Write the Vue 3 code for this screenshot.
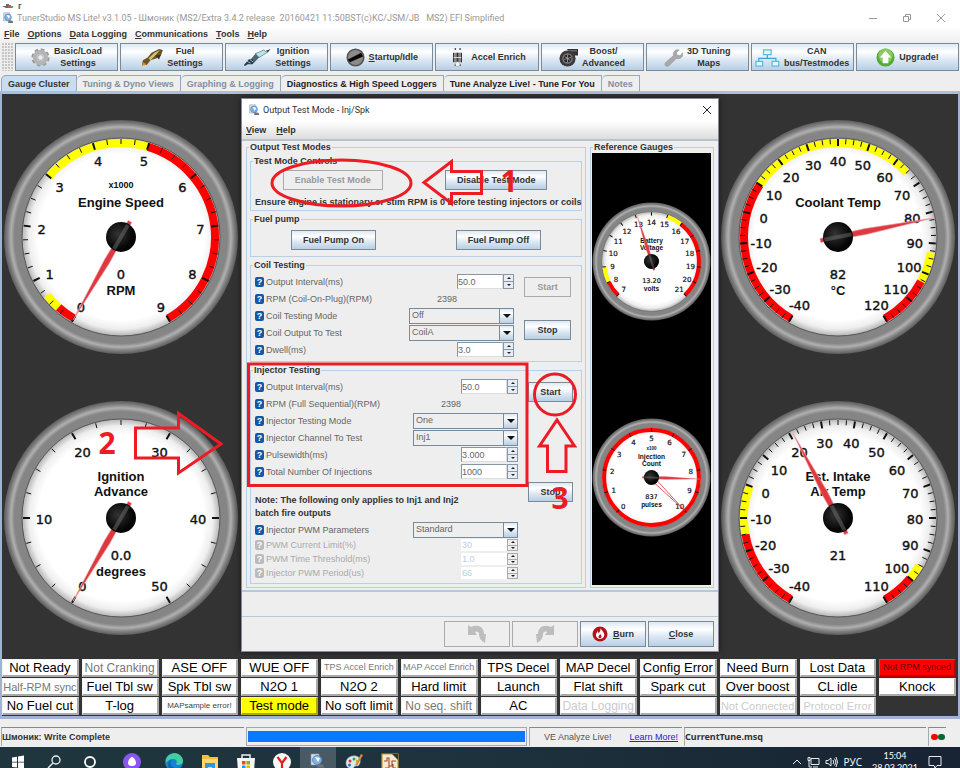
<template>
  <div class="desktop">
    <div class="behind">
      <svg width="11" height="6" viewBox="0 0 11 6"><path d="M0 3h4V1h3v4H4" fill="#667" /><path d="M6 2h3v3H6z" fill="#c55" /><path d="M9 3h2v2H9z" fill="#5a5" /></svg>
      <span>г</span>
    </div>
    <header class="titlebar">
      <svg class="app-icon" viewBox="0 0 16 16" v-html="icons.app"></svg>
      <h1>TunerStudio MS Lite! v3.1.05 - Шмоник (MS2/Extra 3.4.2 release&nbsp; 20160421 11:50BST(c)KC/JSM/JB&nbsp;&nbsp; MS2) EFI Simplified</h1>
      <div class="window-buttons">
        <button aria-label="Minimize"><svg width="10" height="10" viewBox="0 0 10 10"><path d="M1 5.500h8" /></svg></button>
        <button aria-label="Restore"><svg width="10" height="10" viewBox="0 0 10 10"><path d="M1.500 3.500h5v5h-5zM3.500 3.500v-2h5v5h-2" /></svg></button>
        <button aria-label="Close"><svg width="10" height="10" viewBox="0 0 10 10"><path d="M1 1l8 8M9 1l-8 8" /></svg></button>
      </div>
    </header>
    <nav class="menubar">
      <a v-for="item in menu" :key="item" href="#"><u>{{ item[0] }}</u>{{ item.slice(1) }}</a>
    </nav>
    <div class="toolbar">
      <span class="grip"></span>
      <button v-for="tool in tools" :key="tool.icon" class="tool metal">
        <svg :viewBox="tool.box" :class="tool.icon" v-html="icons[tool.icon]"></svg>
        <span><template v-if="tool.key"><u>{{ tool.key }}</u></template>{{ tool.text }}</span>
      </button>
    </div>
    <div class="tabs" role="tablist">
      <button
        v-for="tab in tabs"
        :key="tab.text"
        role="tab"
        class="tab"
        :class="{ active: tab.active, disabled: tab.disabled }"
      >{{ tab.text }}</button>
    </div>

    <main class="cluster">
      <div class="gauges">
        <Gauge v-for="g in gauges" :key="g.id" class="gauge" v-bind="g" />
      </div>
      <div class="indicators">
        <div v-for="(light, i) in lights" :key="i" class="light" :class="light[1]">{{ light[0] }}</div>
      </div>

      <section class="dialog">
        <div class="dialog-title">
          <svg class="app-icon" viewBox="0 0 16 16" v-html="icons.app"></svg>
          <h2>Output Test Mode - Inj/Spk</h2>
          <button aria-label="Close dialog"><svg width="10" height="10" viewBox="0 0 10 10"><path d="M1 1l8 8M9 1l-8 8" /></svg></button>
        </div>
        <nav class="dialog-menu">
          <a href="#"><u>V</u>iew</a>
          <a href="#"><u>H</u>elp</a>
        </nav>
        <div class="dialog-body">
          <fieldset class="modes">
            <legend>Output Test Modes</legend>
            <div class="groups">
              <fieldset class="group">
                <legend>Test Mode Controls</legend>
                <div class="pair">
                  <button class="btn" disabled>Enable Test Mode</button>
                  <button class="btn metal">Disable Test Mode</button>
                </div>
                <p class="hint">Ensure engine is stationary or stim RPM is 0 before testing injectors or coils</p>
              </fieldset>

              <fieldset class="group">
                <legend>Fuel pump</legend>
                <div class="pair pump">
                  <button class="btn metal">Fuel Pump On</button>
                  <button class="btn metal">Fuel Pump Off</button>
                </div>
              </fieldset>

              <fieldset v-for="group in groups" :key="group.title" class="group">
                <legend>{{ group.title }}</legend>
                <div class="split">
                  <div class="form">
                    <template v-for="row in group.rows" :key="row.id">
                      <p v-if="row.note" class="note">{{ row.note }}</p>
                      <div v-else class="row" :class="{ off: row.off }">
                        <span class="help">?</span>
                        <label :for="row.id">{{ row.label }}</label>
                        <output v-if="row.type === 'value'" :id="row.id">{{ row.value }}</output>
                        <span v-else-if="row.type === 'select'" class="combo">
                          <select :id="row.id"><option>{{ row.value }}</option></select>
                          <i class="metal"></i>
                        </span>
                        <span v-else class="spinner">
                          <input :id="row.id" type="text" :value="row.value" :disabled="row.off" />
                          <span class="arrows">
                            <button :aria-label="`Increase ${row.label}`" :disabled="row.off"></button>
                            <button :aria-label="`Decrease ${row.label}`" :disabled="row.off"></button>
                          </span>
                        </span>
                      </div>
                    </template>
                  </div>
                  <div class="side" :class="group.side">
                    <button class="btn" :class="{ metal: !group.idle }" :disabled="group.idle">Start</button>
                    <button class="btn metal">Stop</button>
                  </div>
                </div>
              </fieldset>
            </div>
          </fieldset>

          <fieldset class="reference">
            <legend>Reference Gauges</legend>
            <div class="black">
              <Gauge v-for="g in refGauges" :key="g.id" class="gauge" v-bind="g" />
            </div>
          </fieldset>
        </div>
        <div class="message"></div>
        <div class="actions">
          <button class="btn" aria-label="Undo" disabled>
            <svg width="20" height="20" viewBox="0 0 20 20"><path d="M1 1l3 2c6-3 13-1 13 7h2l-1 9c-4-2-6-5-6-9 0-2-2-3-4-2l2 3H1z" fill="#bdbdbd" /></svg>
          </button>
          <button class="btn" aria-label="Redo" disabled>
            <svg width="20" height="20" viewBox="0 0 20 20"><path d="M19 1l-3 2C10 0 3 2 3 10H1l1 9c4-2 6-5 6-9 0-2 2-3 4-2l-2 3h9z" fill="#bdbdbd" /></svg>
          </button>
          <button class="btn metal">
            <svg width="16" height="16" viewBox="0 0 16 16"><circle cx="8" cy="8" r="7.500" fill="#b5121b" /><path d="M8.500 2c.5 2 4 4 3.800 7A4.200 4.200 0 0 1 4 9.500C3.800 7.500 5 7 5.200 5.200c1 .6 1.200 1.400 1.200 2C8 6 8.800 4 8.500 2z" fill="#fff" /><path d="M8.300 7.500c0 1.500 1.500 2 1.200 3.500-.4 1.600-3 1.500-3-.3 0-1 1.500-1.500 1.800-3.200z" fill="#b5121b" /></svg>
            <span><u>B</u>urn</span>
          </button>
          <button class="btn metal"><span><u>C</u>lose</span></button>
        </div>

        <svg class="marks" viewBox="241 98 478 554">
          <ellipse cx="341.500" cy="183" rx="69.500" ry="23" />
          <path d="M424 182.500L451.500 161.500V171.500H481.500V193.500H451.500V203.500Z" />
          <rect x="248.500" y="364" width="278.500" height="121.500" />
          <circle cx="555" cy="394.500" r="20.500" />
          <path d="M557 420L574.500 446H566V471.500H547.500V446H539.500Z" />
          <path d="M135.500 428H178.500V413.500L221 444L178.500 473V458H135.500Z" />
          <text x="509" y="192">1</text>
          <text x="107" y="454">2</text>
          <text x="560" y="509">3</text>
        </svg>
      </section>
    </main>

    <footer class="statusbar">
      <div class="cell state">Шмоник: Write Complete</div>
      <div class="progress"><div></div></div>
      <div class="cell live"><span>VE Analyze Live!</span><a href="#">Learn More!</a></div>
      <div class="cell tune">CurrentTune.msq</div>
      <div class="cell leds"><i class="red"></i><i class="green"></i></div>
    </footer>

    <div class="taskbar">
      <div class="pinned">
        <button v-for="app in apps" :key="app" :class="app" :aria-label="app">
          <svg width="18" height="18" viewBox="0 0 18 18" v-html="icons[app]"></svg>
        </button>
      </div>
      <div class="tray">
        <svg width="10" height="12" viewBox="0 0 10 12"><path d="M1 8l4-4 4 4" /></svg>
        <svg width="13" height="12" viewBox="0 0 13 12"><path d="M4 2.500h8v6H4zM6 11h5M1 1.500h2v3H1zM2 5v6h3" /></svg>
        <svg width="13" height="12" viewBox="0 0 13 12"><path d="M1 4.500h2l3-2.500v8L3 7.500H1zM8 4q1.500 2 0 4M9.500 2.500q3 3.500 0 7M11 1q3 5 0 10" /></svg>
        <span class="lang">РУС</span>
        <time>15:04<br />28.03.2021</time>
        <svg class="notice" width="14" height="14" viewBox="0 0 14 14"><path d="M1 1.500h12v9H9l-2 2.500-1-2.500H1z" /></svg>
      </div>
    </div>
  </div>
</template>

<script setup>
import { h } from 'vue'

const polar = (angle, r) => {
  const a = (angle * Math.PI) / 180
  return [Math.sin(a) * r, -Math.cos(a) * r]
}

const arc = (from, to, r) => {
  const [x1, y1] = polar(from, r)
  const [x2, y2] = polar(to, r)
  return `M${x1} ${y1}A${r} ${r} 0 ${to - from > 180 ? 1 : 0} 1 ${x2} ${y2}`
}

// round dial, drawn around 0,0 with a radius of 117
const Gauge = (g) => {
  const sweep = g.sweep
  const start = 360 - sweep / 2
  const angle = (v) => start + ((v - g.min) / (g.max - g.min)) * sweep
  const out = [
    h('defs', [
      h('radialGradient', { id: `face-${g.id}` }, [
        h('stop', { offset: '84%', 'stop-color': '#fff' }),
        h('stop', { offset: '93%', 'stop-color': '#eee' }),
        h('stop', { offset: '100%', 'stop-color': '#b4b4b4' })
      ]),
      h('radialGradient', { id: `rim-${g.id}` }, [
        h('stop', { offset: '91%', 'stop-color': '#858585' }),
        h('stop', { offset: '94%', 'stop-color': '#b0b0b0' }),
        h('stop', { offset: '97%', 'stop-color': '#808080' }),
        h('stop', { offset: '100%', 'stop-color': '#5c5c5c' })
      ]),
      h('radialGradient', { id: `hub-${g.id}`, cx: '40%', cy: '40%' }, [
        h('stop', { offset: '0%', 'stop-color': '#333' }),
        h('stop', { offset: '100%', 'stop-color': '#050505' })
      ])
    ]),
    h('circle', { r: 117, fill: `url(#rim-${g.id})` }),
    h('circle', { r: 99, fill: `url(#face-${g.id})`, stroke: '#555', 'stroke-width': 1 })
  ]
  g.zones.forEach(([from, to, color]) => {
    out.push(h('path', { d: arc(angle(from), angle(to), 94), fill: 'none', stroke: color, 'stroke-width': 8 }))
  })
  const count = Math.round((g.max - g.min) / g.minor)
  for (let i = 0; i <= count; i++) {
    const major = i % Math.round(g.major / g.minor) === 0
    const a = angle(g.min + i * g.minor)
    const [x1, y1] = polar(a, 98)
    const [x2, y2] = polar(a, major ? 91 : 93)
    out.push(h('line', { x1, y1, x2, y2, stroke: '#111', 'stroke-width': major ? 2 : 1 }))
  }
  const title = (y, size, value) =>
    h('text', { x: 0, y, 'font-size': size, 'font-weight': 700, 'text-anchor': 'middle', fill: '#111' }, value)
  const digits = (x, y, size, value) =>
    h('text', { x, y, 'font-size': size, 'font-family': 'DejaVu Sans, sans-serif', 'font-weight': 400, 'text-anchor': 'middle', fill: '#111', stroke: '#111', 'stroke-width': 0.4 }, value)
  for (let v = g.min; v <= g.max; v += g.major) {
    const [x, y] = polar(angle(v), g.labelRadius)
    out.push(digits(x, y + 6, g.small ? 14 : 13, String(v)))
  }
  const lines = g.title
  lines.forEach((line, i) => out.push(title(lines.length > 1 ? -37 + i * 15 : -30, 13, line)))
  if (g.scale) out.push(title(g.small ? -55 : -49, 9, g.scale))
  out.push(digits(0, 42, 13, g.value))
  if (g.units) out.push(title(58, 13, g.units))
  if (g.peak) {
    out.push(h('path', { d: 'M-4 0L0 -94L4 0', fill: 'none', stroke: '#e03038', 'stroke-width': 1.5, transform: `rotate(${angle(g.peak)})` }))
  }
  const turn = `rotate(${angle(g.reading)})`
  out.push(h('path', { d: 'M-2 18L-3 -28L0 -96L3 -28L2 18Z', fill: '#e03840', stroke: '#e8a0a4', 'stroke-width': 0.6, transform: turn }))
  out.push(h('circle', { r: 15, fill: `url(#hub-${g.id})` }))
  out.push(h('path', { d: 'M-2 14L-2 -14L2 -14L2 14Z', fill: '#777', opacity: 0.45, transform: turn }))
  return h('svg', { viewBox: '-118 -118 236 236', role: 'img', 'aria-label': lines.join(' ') }, out)
}
Gauge.props = ['id', 'title', 'min', 'max', 'minor', 'major', 'sweep', 'zones', 'value', 'reading', 'units', 'scale', 'labelRadius', 'peak', 'small']

const red = '#f00'
const yellow = '#ff0'

const gauges = [
  {
    id: 'rpm', title: ['Engine Speed'], min: 0, max: 9, minor: 0.25, major: 1, sweep: 300, labelRadius: 80,
    zones: [[0, 0.35, red], [0.35, 0.65, yellow], [3, 5, yellow], [5, 9, red]],
    value: '0', reading: 0, units: 'RPM', scale: 'x1000'
  },
  {
    id: 'clt', title: ['Coolant Temp'], min: -40, max: 120, minor: 2.5, major: 10, sweep: 300, labelRadius: 77,
    zones: [[-40, 10, red], [10, 65, yellow], [93, 103, yellow], [103, 120, red]],
    value: '82', reading: 82, units: '°C'
  },
  {
    id: 'adv', title: ['Ignition', 'Advance'], min: 0, max: 50, minor: 2.5, major: 10, sweep: 300, labelRadius: 77,
    zones: [], value: '0.0', reading: 0, units: 'degrees'
  },
  {
    id: 'iat', title: ['Est. Intake', 'Air Temp'], min: -40, max: 110, minor: 2.5, major: 10, sweep: 300, labelRadius: 77,
    zones: [[-40, -15, red], [-15, 0, yellow], [95, 100, yellow], [100, 110, red]],
    value: '21', reading: 21
  }
]

const refGauges = [
  {
    id: 'bat', title: ['Battery', 'Voltage'], min: 7, max: 21, minor: 1, major: 1, sweep: 270, labelRadius: 78, small: true,
    zones: [[7, 8, red], [8, 9, yellow], [15, 16, yellow], [16, 21, red]],
    value: '13.20', reading: 13.1, units: 'volts'
  },
  {
    id: 'inj', title: ['Injection', 'Count'], min: 0, max: 10, minor: 1, major: 1, sweep: 270, labelRadius: 79, small: true,
    zones: [[0, 10, red], [10, 13.34, red]],
    value: '837', reading: 8.4, units: 'pulses', scale: 'x100', peak: 10
  }
]

const menu = ['File', 'Options', 'Data Logging', 'Communications', 'Tools', 'Help']

const tools = [
  { icon: 'gear', box: '0 0 20 20', text: 'Basic/Load\nSettings' },
  { icon: 'injector', box: '0 0 24 20', text: 'Fuel\nSettings' },
  { icon: 'plug', box: '0 0 30 20', text: 'Ignition\nSettings' },
  { icon: 'key', box: '0 0 20 20', key: 'S', text: 'tartup/Idle' },
  { icon: 'pump', box: '0 0 20 20', text: 'Accel Enrich' },
  { icon: 'turbo', box: '0 0 20 20', text: 'Boost/\nAdvanced' },
  { icon: 'wrench', box: '0 0 20 20', text: '3D Tuning\nMaps' },
  { icon: 'network', box: '0 0 26 20', text: 'CAN\nbus/Testmodes' },
  { icon: 'upgrade', box: '0 0 20 20', text: 'Upgrade!' }
]

const tabs = [
  { text: 'Gauge Cluster', active: true },
  { text: 'Tuning & Dyno Views', disabled: true },
  { text: 'Graphing & Logging', disabled: true },
  { text: 'Diagnostics & High Speed Loggers' },
  { text: 'Tune Analyze Live! - Tune For You' },
  { text: 'Notes', disabled: true }
]

const lights = [
  ['Not Ready'], ['Not Cranking', 'soft'], ['ASE OFF'], ['WUE OFF'], ['TPS Accel Enrich', 'soft tiny'], ['MAP Accel Enrich', 'soft tiny'],
  ['TPS Decel'], ['MAP Decel'], ['Config Error'], ['Need Burn'], ['Lost Data'], ['Not RPM synced', 'alarm'],
  ['Half-RPM sync', 'soft mid'], ['Fuel Tbl sw'], ['Spk Tbl sw'], ['N2O 1'], ['N2O 2'], ['Hard limit'],
  ['Launch'], ['Flat shift'], ['Spark cut'], ['Over boost'], ['CL idle'], ['Knock'],
  ['No Fuel cut'], ['T-log'], ['MAPsample error!', 'small'], ['Test mode', 'warn'], ['No soft limit'], ['No seq. shift', 'soft'],
  ['AC'], ['Data Logging', 'faint'], [''], ['Not Connected', 'faint mid'], ['Protocol Error', 'faint mid']
]

const groups = [
  {
    title: 'Coil Testing',
    idle: true,
    side: 'coil',
    rows: [
      { id: 'coil-interval', label: 'Output Interval(ms)', value: '50.0' },
      { id: 'coil-rpm', label: 'RPM (Coil-On-Plug)(RPM)', type: 'value', value: '2398' },
      { id: 'coil-mode', label: 'Coil Testing Mode', type: 'select', value: 'Off' },
      { id: 'coil-output', label: 'Coil Output To Test', type: 'select', value: 'CoilA' },
      { id: 'coil-dwell', label: 'Dwell(ms)', value: '3.0' }
    ]
  },
  {
    title: 'Injector Testing',
    side: 'inj',
    rows: [
      { id: 'inj-interval', label: 'Output Interval(ms)', value: '50.0' },
      { id: 'inj-rpm', label: 'RPM (Full Sequential)(RPM)', type: 'value', value: '2398' },
      { id: 'inj-mode', label: 'Injector Testing Mode', type: 'select', value: 'One' },
      { id: 'inj-channel', label: 'Injector Channel To Test', type: 'select', value: 'Inj1' },
      { id: 'inj-width', label: 'Pulsewidth(ms)', value: '3.000' },
      { id: 'inj-total', label: 'Total Number Of Injections', value: '1000' },
      { id: 'inj-note', note: 'Note: The following only applies to Inj1 and Inj2\nbatch fire outputs' },
      { id: 'pwm-params', label: 'Injector PWM Parameters', type: 'select', value: 'Standard' },
      { id: 'pwm-limit', label: 'PWM Current Limit(%)', value: '30', off: true },
      { id: 'pwm-threshold', label: 'PWM Time Threshold(ms)', value: '1.0', off: true },
      { id: 'pwm-period', label: 'Injector PWM Period(us)', value: '66', off: true }
    ]
  }
]

const apps = ['start', 'search', 'cortana', 'alice', 'edge', 'explorer', 'store', 'yandex', 'tuner', 'paint', 'logviewer']

const tunerIcon = '<path d="M2 1h8v11H2z" fill="#d5dde6" stroke="#8898a8" stroke-width=".6"/><circle cx="8" cy="7" r="4.500" fill="#7fb2e0" stroke="#5a92c8"/><path d="M6 4l3 5 2-4z" fill="#fff"/><path d="M9 11l5 .5 1 3H8z" fill="#6c7480"/>'

const icons = {
  app: tunerIcon,
  tuner: tunerIcon,
  gear: '<circle cx="10" cy="10" r="7.500" fill="none" stroke="#989898" stroke-width="4" stroke-dasharray="3.500 2.390"/><circle cx="10" cy="10" r="5.800" fill="none" stroke="#b5b5b5" stroke-width="4.500"/><circle cx="10" cy="10" r="3" fill="#e6edf4" stroke="#888" stroke-width=".6"/>',
  injector: '<path d="M1 18l1-5 5-3 4-5 8-4 4 1-2 6-5 3-6 2-4 5z" fill="#6a5426"/><path d="M8 11l6-6 6-3-5 6-5 5z" fill="#d8c070"/><path d="M1 19l1-4 4 2z" fill="#e28a20"/><path d="M15 8l6-1-2 5z" fill="#3c3423"/>',
  plug: '<path d="M1 18l5-6 4-1 3 3-3 3-5 0-3 2z" fill="#263744"/><path d="M9 11l5-6 4 4-6 6z" fill="#4e6573"/><path d="M13 6l9-4 3 3-8 5z" fill="#b5e4ef" stroke="#54717c" stroke-width=".7"/><path d="M24 3l5-2-3 4z" fill="#445"/><path d="M4 14l4 2M7 12l4 3" stroke="#a8c8dc" fill="none"/>',
  key: '<circle cx="10" cy="10" r="9.500" fill="#555"/><circle cx="10" cy="10" r="7.800" fill="#8b8b8b"/><path d="M2 12l14-7 2 4L4 15z" fill="#080808"/>',
  pump: '<path d="M7 5h6v10H7z" fill="#888"/><path d="M6 5v5M10 5v10M14 5v10M6 10v5" stroke="#333" stroke-width="1.500"/><path d="M6 10h8" stroke="#ddd"/><circle cx="10" cy="17" r="2.500" fill="#f5f5f5" stroke="#999" stroke-width=".6"/><path d="M7 1h1.500M12 1h1.500M7 18h1M12.500 18h1" stroke="#222" stroke-width="1.500"/>',
  turbo: '<path d="M8 1h12v7h-4z" fill="#333"/><path d="M10 3h9" stroke="#888"/><circle cx="9" cy="11" r="8.500" fill="#3b3b3b"/><circle cx="9" cy="11" r="5.500" fill="#777"/><circle cx="9" cy="11" r="4" fill="#222"/><path d="M6 9l6 4M9 7v8M5.500 12l7-2" stroke="#999"/>',
  wrench: '<path d="M2 15l8-7c-1-4 2-7 6-6l-3 3 1 3 3 0 3-3c0 5-3 7-7 6l-7 7c-3 3-7 0-4-3z" fill="#a9a9a9" stroke="#8a8a8a" stroke-width=".5"/>',
  network: '<path d="M13 7v4M4 14v-3h18v3" fill="none" stroke="#35a9d6" stroke-width="1.300"/><path d="M9 2h8v5H9zM1 14h7v5H1zM18 14h7v5h-7z" fill="#e9f6fc" stroke="#4fc0e8" stroke-width="1.300"/>',
  upgrade: '<circle cx="10" cy="10" r="9.500" fill="#58a83a"/><circle cx="10" cy="8" r="7.500" fill="#86cc5e"/><path d="M10 3l6 7h-3v6H7v-6H4z" fill="#fff"/>',
  start: '<path d="M3 4.500l5-.8v5H3zM9 3.500l6-.9v6.100H9zM3 9.600h5v5l-5-.7zM9 9.600h6v6.100l-6-.9z" fill="#fff"/>',
  search: '<circle cx="11" cy="7" r="4" fill="none" stroke="#e8ecee" stroke-width="1.300"/><path d="M8 10l-5 5" stroke="#e8ecee" stroke-width="1.400"/>',
  cortana: '<circle cx="9" cy="9" r="5" fill="none" stroke="#fff" stroke-width="1.800"/>',
  alice: '<circle cx="9" cy="9" r="9" fill="#8a55f5"/><path d="M9 4c2 0 4 4 4 6s-1.500 3-4 3-4-1-4-3 2-6 4-6z" fill="#fff"/>',
  edge: '<circle cx="9" cy="9" r="9" fill="#1682d0"/><path d="M1 7C3-2 17-2 18 8c0 4-6 5-7 3 2-3 0-5-3-5-3 0-6 2-7 4z" fill="#42cfa0"/><path d="M7 7c-4 3-1 9 6 8 1 0 3-1 3-1-3 5-12 4-13-2 0-3 2-5 4-5z" fill="#1160aa"/>',
  explorer: '<path d="M1 2h6l2 2h8v13H1z" fill="#f4bd3c"/><path d="M1 6h16v11H1z" fill="#fbd775"/><path d="M4 10h10v7h-3v-3H7v3H4z" fill="#3c94d8"/>',
  store: '<path d="M5 5V2h8v3" fill="none" stroke="#eee" stroke-width="1.500"/><path d="M0 5h18l-1 13H1z" fill="#f6f6f6"/><path d="M5 8h3.500v3.500H5z" fill="#e84c22"/><path d="M9.500 8H13v3.500H9.500z" fill="#7fba00"/><path d="M5 12.500h3.500V16H5z" fill="#1aa0e8"/><path d="M9.500 12.500H13V16H9.500z" fill="#f5b400"/>',
  yandex: '<circle cx="9" cy="9" r="9" fill="#f8f8f8"/><path d="M4.500 4L9 10v6M13.500 4L9 10" fill="none" stroke="#e02020" stroke-width="2.200"/>',
  paint: '<path d="M1 10C1 5 6 2 11 3c5 1 5 6 3 9-1 2-4 0-5 2-1 3-8 2-8-4z" fill="#d8e9f2" stroke="#7fa5ba" stroke-width=".6"/><circle cx="5" cy="8" r="1.500" fill="#d33"/><circle cx="9" cy="6" r="1.500" fill="#3a3"/><circle cx="4.500" cy="12" r="1.500" fill="#36c"/><circle cx="12" cy="8" r="1.300" fill="#e9b020"/><path d="M10 12l6-11 2 1-6 11z" fill="#d9893a"/>',
  logviewer: '<path d="M1 1h16v17H1z" fill="#f3ead2" stroke="#c7982c" stroke-width="1.200"/><path d="M11 1h6v6z" fill="#333"/><path d="M3 8h3V5h2v8h3V8h4M4 15h4v-3M12 11v4h3" fill="none" stroke="#a8442a" stroke-width="1.100"/>'
}
</script>

<style>
body {
  margin: 0;
}
</style>

<style scoped>
.desktop {
  display: flex;
  flex-direction: column;
  min-height: 100vh;
  overflow: hidden;
  background: #eee;
  color: #333;
  font: bold 9px/12px "Liberation Sans", Arial, sans-serif;
}

.desktop * {
  box-sizing: border-box;
}

button,
input,
select {
  margin: 0;
  padding: 0;
  border: 0;
  border-radius: 0;
  background: none;
  color: inherit;
  font: inherit;
}

a {
  color: inherit;
  text-decoration: none;
}

h1,
h2,
p {
  margin: 0;
  font-size: 9px;
}

.metal {
  border: 1px solid #7a8a99;
  background: linear-gradient(#dde8f3, #fff 30%, #dde8f3 60%, #b8cfe5);
}

.behind {
  display: flex;
  align-items: center;
  gap: 5px;
  height: 9px;
  padding: 2px 2px 0;
  background: #fff;
  color: #555;
}

.titlebar {
  display: flex;
  align-items: center;
  height: 17px;
  padding-left: 2px;
  background: #fff;
}

.app-icon {
  flex: none;
  width: 12px;
  height: 12px;
}

.titlebar h1,
.dialog-title h2 {
  flex: 1;
  margin-left: 3px;
  font-family: Roboto, "Open Sans", sans-serif;
  font-weight: 400;
  white-space: nowrap;
}

.titlebar h1 {
  color: #999;
}

.window-buttons {
  display: flex;
  gap: 24px;
  padding-right: 14px;
}

.window-buttons button,
.dialog-title button {
  display: flex;
}

.window-buttons path,
.dialog-title button path {
  fill: none;
  stroke: #999;
}

.menubar {
  display: flex;
  gap: 8px;
  height: 16px;
  padding: 2px 4px;
  background: linear-gradient(#fff, #f0f0f0);
}

.toolbar {
  display: flex;
  gap: 2px;
  height: 31px;
  padding: 1px 1px 2px 2px;
}

.grip {
  width: 11px;
  background: radial-gradient(circle at 1px 1px, #c5c5c5 1px, transparent 1px) 0 0 / 3px 3px;
}

.tool {
  display: flex;
  flex: 1;
  align-items: center;
  justify-content: center;
  gap: 4px;
  color: #333;
  white-space: pre;
}

.tool svg {
  flex: none;
  height: 19px;
}

.tabs {
  display: flex;
  align-items: flex-end;
  height: 18px;
  padding: 2px 1px 0;
}

.tab {
  height: 16px;
  padding: 0 6px;
  border: 1px solid #98a8b8;
  border-left-width: 0;
  border-bottom: 0;
  border-top-left-radius: 5px;
  color: #222;
}

.tab.disabled {
  color: #8090a0;
}

.tab.active {
  border-left-width: 1px;
  background: #c8ddf2;
  color: #333;
}

.cluster {
  position: relative;
  display: flex;
  flex: 1;
  flex-direction: column;
  border: 2px solid #9fb4d4;
  border-top: 3px solid #a9c2dc;
  border-bottom-width: 3px;
  background: #333;
}

.gauges {
  display: grid;
  flex: 1;
  grid-template-columns: 236px 236px;
  justify-content: space-between;
  align-items: center;
  padding: 2px 2px 0 1px;
}

.gauge {
  display: block;
  width: 100%;
  font-family: "Liberation Sans", Arial, sans-serif;
}

.indicators {
  display: grid;
  grid-template-columns: repeat(12, minmax(0, 1fr));
  grid-auto-rows: 18px;
  gap: 1px 3px;
  padding: 0 2px 1px 0;
}

.light {
  border: 1px solid #f4f4f4;
  border-right: 2px solid #aaa;
  border-bottom: 2px solid #aaa;
  background: #fff;
  color: #000;
  font: 13px/15px "Liberation Sans", Arial, sans-serif;
  text-align: center;
  white-space: nowrap;
}

.light.soft {
  color: #777;
  font-size: 12px;
  line-height: 17px;
}

.light.tiny {
  font-size: 9px;
  line-height: 15px;
}

.light.mid {
  font-size: 11px;
}

.light.small {
  color: #444;
  font-size: 8px;
}

.light.faint {
  color: #ccc;
  font-size: 12px;
  line-height: 17px;
}

.light.faint.mid {
  font-size: 11px;
}

.light.alarm {
  border-color: #f33 #b00 #b00 #f33;
  background: #f00;
  color: #600;
  font-size: 9px;
}

.light.warn {
  border-color: #ff6 #aa0 #aa0 #ff6;
  background: #ff0;
}

.dialog {
  position: absolute;
  top: 4px;
  left: 50%;
  width: 478px;
  margin-left: -239px;
  border: 1px solid #889;
  background: #eee;
  box-shadow: 0 0 6px #0008;
}

.dialog-title {
  display: flex;
  align-items: center;
  height: 22px;
  padding: 0 6px;
  background: #fff;
}

.dialog-title button path {
  stroke: #222;
}

.dialog-menu {
  display: flex;
  gap: 10px;
  height: 20px;
  padding: 3px 4px;
  border-bottom: 2px solid #b8c4ce;
  background: linear-gradient(#fff, #ddd);
}

.dialog-body {
  display: flex;
  gap: 4px;
  padding: 0 4px 2px;
}

fieldset {
  min-width: 0;
  margin: 0;
  padding: 0;
  border: 1px solid #b8cfe5;
}

legend {
  margin-left: 2px;
  padding: 0 1px;
  line-height: 12px;
}

.modes {
  flex: 1;
}

.reference {
  width: 124px;
}

.groups {
  display: flex;
  flex-direction: column;
  gap: 2px;
  padding: 2px 3px 3px;
}

.pair {
  display: grid;
  grid-template-columns: 1fr 1fr;
  justify-items: center;
  padding: 3px 3px 0 0;
}

.pair.pump {
  padding: 5px 0 6px;
}

.btn {
  height: 20px;
  padding: 0 11px;
  white-space: nowrap;
}

.btn:disabled {
  border: 1px solid #aaa;
  color: #999;
}

.hint {
  padding: 6px 4px 2px;
  white-space: nowrap;
}

.split {
  display: flex;
}

.form {
  flex: 1;
  padding: 2px 0 3px 4px;
}

.row {
  display: flex;
  align-items: center;
  height: 17px;
  color: #666;
  font-weight: 400;
}

.row label {
  flex: 1;
  white-space: nowrap;
}

.row.off {
  height: 14px;
  color: #aaa;
}

.help {
  width: 9px;
  height: 10px;
  margin-right: 2px;
  border-radius: 2px;
  background: #1258a8;
  color: #fff;
  font-weight: 700;
  line-height: 10px;
  text-align: center;
}

.off .help {
  background: #bbb;
}

output {
  margin-right: 57px;
}

.combo {
  position: relative;
  width: 105px;
  height: 16px;
}

.combo select {
  width: 100%;
  height: 100%;
  padding: 0 2px 2px;
  border: 1px solid #7a8a99;
  background: #eee;
  appearance: none;
}

.combo i {
  position: absolute;
  top: 0;
  right: 0;
  width: 15px;
  height: 16px;
  pointer-events: none;
}

.combo i::after {
  content: "";
  display: block;
  margin: 5px auto;
  width: 0;
  border: 4px solid transparent;
  border-top-color: #111;
  border-bottom: 0;
}

.spinner {
  display: flex;
  width: 57px;
  height: 15px;
}

.spinner input {
  flex: 1;
  min-width: 0;
  border: 1px solid #8796a5;
  border-right-color: #ddd;
  border-bottom-color: #ddd;
  background: #fff;
}

.spinner input:disabled {
  border-color: #fff;
  color: #b8cfe5;
}

.off .spinner {
  height: 12px;
}

.arrows {
  display: flex;
  flex-direction: column;
  width: 11px;
}

.arrows button {
  display: flex;
  flex: 1;
  align-items: center;
  justify-content: center;
  border: 1px solid #8a98a6;
  background: #e6edf4;
}

.arrows button + button {
  border-top: 0;
}

.arrows button::after {
  content: "";
  border: 2px solid transparent;
  border-top: 0;
  border-bottom-color: #222;
}

.arrows button + button::after {
  border-top: 2px solid #222;
  border-bottom: 0;
}

.off .arrows button {
  border-color: #aaa;
  background: #eee;
}

.side {
  display: flex;
  flex-direction: column;
  align-items: flex-start;
  width: 67px;
  padding: 6px 10px 0;
}

.side .btn {
  width: 47px;
  padding: 0;
}

.side.coil {
  gap: 23px;
}

.side.inj {
  width: 63px;
  gap: 80px;
}

.side.inj .btn {
  width: 45px;
}

.note {
  padding: 14px 0 1px;
  line-height: 13px;
  white-space: pre;
}

.black {
  display: grid;
  grid-auto-rows: 1fr;
  align-items: center;
  height: 432px;
  margin: 0 2px 2px 1px;
  background: #000;
}

.message {
  height: 27px;
  border-top: 2px solid #b8c8d8;
  border-bottom: 1px solid #b8c8d8;
}

.actions {
  display: flex;
  justify-content: flex-end;
  gap: 2px;
  padding: 4px 4px 4px 3px;
}

.actions .btn {
  display: flex;
  align-items: center;
  justify-content: center;
  gap: 5px;
  width: 66px;
  height: 26px;
  padding: 0;
}

.marks {
  position: absolute;
  top: -1px;
  left: -1px;
  width: 478px;
  height: 554px;
  overflow: visible;
  pointer-events: none;
}

.marks ellipse,
.marks path,
.marks rect,
.marks circle {
  fill: none;
  stroke: #ed1c24;
  stroke-width: 3px;
}

.marks text {
  fill: #ed1c24;
  font: bold 30px "Open Sans", sans-serif;
  text-anchor: middle;
}

.statusbar {
  display: flex;
  gap: 2px;
  height: 28px;
  padding: 8px 14px 1px 1px;
}

.cell {
  display: flex;
  align-items: center;
  border: 1px solid #aaa;
  border-right: 0;
  border-bottom: 0;
  border-top-color: #888;
}

.state {
  width: 243px;
}

.progress {
  width: 281px;
  padding: 3px 1px;
  border: 1px solid #9ab;
}

.progress div {
  height: 100%;
  background: #0a78ff;
}

.live {
  justify-content: space-between;
  width: 153px;
  padding: 0 4px 0 14px;
  color: #555;
  font-weight: 400;
}

.live a {
  color: #22d;
  text-decoration: underline;
}

.tune {
  flex: 1;
  font-family: "Noto Sans", sans-serif;
}

.leds {
  width: 18px;
  justify-content: center;
}

.leds i {
  width: 7px;
  height: 6px;
  border-radius: 3px;
}

.leds .red {
  background: #f00;
}

.leds .green {
  background: #063;
}

.taskbar {
  display: flex;
  justify-content: space-between;
  height: 21px;
  overflow: hidden;
  background: linear-gradient(90deg, #20363f, #1d323c 50%, #182333);
  color: #fff;
}

.pinned,
.tray {
  display: flex;
  align-items: center;
  height: 29px;
}

.pinned button {
  display: flex;
  align-items: center;
  justify-content: center;
  width: 36px;
  height: 29px;
}

.pinned .alice {
  width: 48px;
}

.pinned .tuner {
  background: #4a5a64;
}

.tray {
  gap: 5px;
  padding-right: 18px;
}

.tray path {
  fill: none;
  stroke: #e8ecf0;
}

.lang {
  font: 10px/12px "Open Sans", sans-serif;
}

.tray time {
  margin: 0 5px;
  font: 9px/12px Lato, "Open Sans", sans-serif;
  text-align: center;
}
</style>
